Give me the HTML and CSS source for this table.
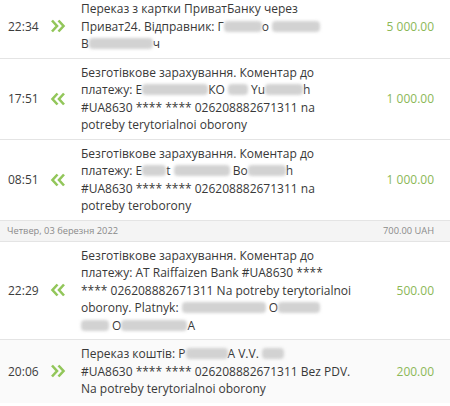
FILE: index.html
```html
<!DOCTYPE html>
<html lang="uk">
<head>
<meta charset="utf-8">
<link rel="stylesheet" href="styles.css">
</head>
<body>
<div class="list">
  <div class="row first">
    <div class="time">22:34</div>
    <div class="dir"><svg viewBox="0 0 16 14" width="16" height="14"><path d="M2 1.5 L7 7 L2 12.5 M8.5 1.5 L13.5 7 L8.5 12.5" /></svg></div>
    <div class="desc">Переказ з картки ПриватБанку через<br>Приват24. Відправник: Г<span class="blur" style="width:38px"></span>о <span class="blur" style="width:48px"></span><br>В<span class="blur" style="width:64px"></span>ч</div>
    <div class="amount">5 000.00</div>
  </div>
  <div class="row">
    <div class="time">17:51</div>
    <div class="dir"><svg viewBox="0 0 16 14" width="16" height="14"><path d="M7.5 1.5 L2.5 7 L7.5 12.5 M14 1.5 L9 7 L14 12.5" /></svg></div>
    <div class="desc">Безготівкове зарахування. Коментар до<br>платежу: Е<span class="blur" style="width:66px"></span>КО <span class="blur" style="width:20px"></span> Yu<span class="blur" style="width:38px"></span>h<br>#UA8630 **** **** 026208882671311 na<br>potreby terytorialnoi oborony</div>
    <div class="amount">1 000.00</div>
  </div>
  <div class="row">
    <div class="time">08:51</div>
    <div class="dir"><svg viewBox="0 0 16 14" width="16" height="14"><path d="M7.5 1.5 L2.5 7 L7.5 12.5 M14 1.5 L9 7 L14 12.5" /></svg></div>
    <div class="desc">Безготівкове зарахування. Коментар до<br>платежу: Е<span class="blur" style="width:24px"></span>t <span class="blur" style="width:56px"></span> Bo<span class="blur" style="width:38px"></span>h<br>#UA8630 **** **** 026208882671311 na<br>potreby teroborony</div>
    <div class="amount">1 000.00</div>
  </div>
  <div class="day">
    <span>Четвер, 03 березня 2022</span>
    <span>700.00 UAH</span>
  </div>
  <div class="row">
    <div class="time">22:29</div>
    <div class="dir"><svg viewBox="0 0 16 14" width="16" height="14"><path d="M7.5 1.5 L2.5 7 L7.5 12.5 M14 1.5 L9 7 L14 12.5" /></svg></div>
    <div class="desc">Безготівкове зарахування. Коментар до<br>платежу: AT Raiffaizen Bank #UA8630 ****<br>**** 026208882671311 Na potreby terytorialnoi<br>oborony. Platnyk: <span class="blur" style="width:84px"></span> O<span class="blur" style="width:42px"></span><br><span class="blur" style="width:28px"></span> O<span class="blur" style="width:66px"></span>A</div>
    <div class="amount">500.00</div>
  </div>
  <div class="row last">
    <div class="time">20:06</div>
    <div class="dir"><svg viewBox="0 0 16 14" width="16" height="14"><path d="M2 1.5 L7 7 L2 12.5 M8.5 1.5 L13.5 7 L8.5 12.5" /></svg></div>
    <div class="desc">Переказ коштів: Р<span class="blur" style="width:42px"></span>А V.V. <span class="blur" style="width:22px"></span><br>#UA8630 **** **** 026208882671311 Bez PDV.<br>Na potreby terytorialnoi oborony</div>
    <div class="amount">200.00</div>
  </div>
</div>
</body>
</html>
```

FILE: styles.css
```css
html, body {
  margin: 0;
  padding: 0;
  background: #ffffff;
}

body {
  font-family: "Open Sans", "Noto Sans", sans-serif;
  font-size: 12px;
  color: #383838;
  overflow: hidden;
}

.list {
  margin-top: -5px;
}

.row {
  display: grid;
  grid-template-columns: 42px 31px 1fr auto;
  align-items: center;
  padding: 5px 16px 5px 8px;
  border-bottom: 1px solid #e4e4e4;
}

.row.last {
  background: #fafafa;
  border-bottom: none;
}

.time {
  color: #3c3c3c;
}

.dir {
  display: flex;
  align-items: center;
}

.dir svg path {
  fill: none;
  stroke: #92c65a;
  stroke-width: 2.6;
  stroke-linecap: butt;
  stroke-linejoin: miter;
}

.desc {
  line-height: 17.5px;
}

.amount {
  color: #8cb857;
  text-align: right;
}

.blur {
  display: inline-block;
  height: 11px;
  vertical-align: -1px;
  background: #d2d2d2;
  border-radius: 4px;
  filter: blur(1.8px);
}

.day {
  display: flex;
  justify-content: space-between;
  align-items: center;
  height: 20px;
  padding: 0 16px 0 7px;
  background: #f4f4f4;
  border-bottom: 1px solid #e4e4e4;
  font-size: 9.3px;
  color: #8a8a8a;
}
```
